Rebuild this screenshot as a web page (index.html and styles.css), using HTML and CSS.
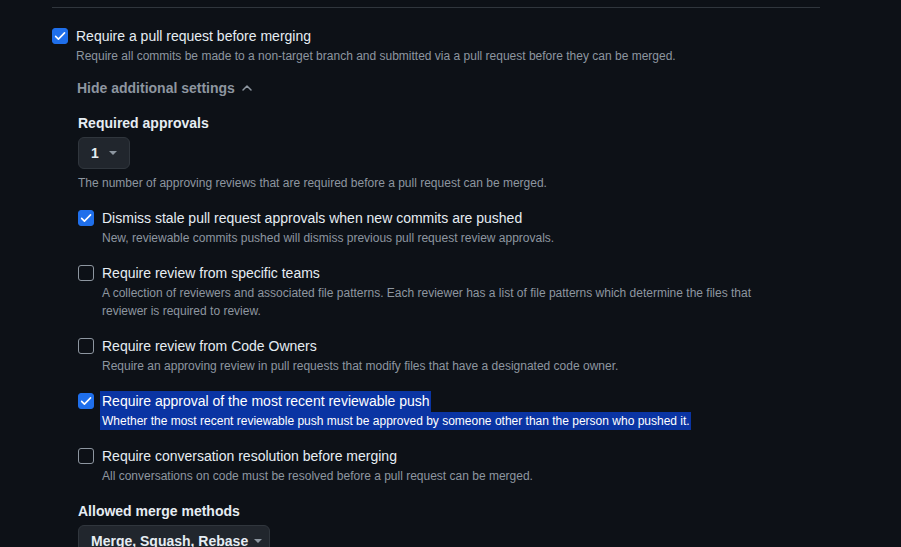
FILE: index.html
```html
<!DOCTYPE html>
<html lang="en">
<head>
<meta charset="UTF-8">
<meta name="viewport" content="width=device-width, initial-scale=1.0">
<title>Branch protection rule</title>
<link rel="stylesheet" href="styles.css">
</head>
<body>
<div class="section">
    <div class="rule">
        <span class="checkbox checked">
            <svg viewBox="0 0 16 16" width="14" height="14"><path d="M3 8.4l3.2 3.2 7-7.2" fill="none" stroke="#fff" stroke-width="1.8" stroke-linecap="round" stroke-linejoin="round"/></svg>
        </span>
        <div class="rule-body">
            <div class="rule-title">Require a pull request before merging</div>
            <div class="rule-note">Require all commits be made to a non-target branch and submitted via a pull request before they can be merged.</div>
        </div>
    </div>

    <div class="nested">
        <div class="toggle">Hide additional settings
            <svg viewBox="0 0 16 16" width="16" height="16"><path d="M4 10l4-4 4 4" fill="none" stroke="currentColor" stroke-width="1.5" stroke-linecap="round" stroke-linejoin="round"/></svg>
        </div>

        <div class="inner">
            <div class="label">Required approvals</div>
            <button class="select small">1 <span class="caret"></span></button>
            <div class="help">The number of approving reviews that are required before a pull request can be merged.</div>

            <div class="rule sub">
                <span class="checkbox checked">
                    <svg viewBox="0 0 16 16" width="14" height="14"><path d="M3 8.4l3.2 3.2 7-7.2" fill="none" stroke="#fff" stroke-width="1.8" stroke-linecap="round" stroke-linejoin="round"/></svg>
                </span>
                <div class="rule-body">
                    <div class="rule-title">Dismiss stale pull request approvals when new commits are pushed</div>
                    <div class="rule-note">New, reviewable commits pushed will dismiss previous pull request review approvals.</div>
                </div>
            </div>

            <div class="rule sub">
                <span class="checkbox"></span>
                <div class="rule-body">
                    <div class="rule-title">Require review from specific teams</div>
                    <div class="rule-note wrap">A collection of reviewers and associated file patterns. Each reviewer has a list of file patterns which determine the files that reviewer is required to review.</div>
                </div>
            </div>

            <div class="rule sub">
                <span class="checkbox"></span>
                <div class="rule-body">
                    <div class="rule-title">Require review from Code Owners</div>
                    <div class="rule-note">Require an approving review in pull requests that modify files that have a designated code owner.</div>
                </div>
            </div>

            <div class="rule sub">
                <span class="checkbox checked">
                    <svg viewBox="0 0 16 16" width="14" height="14"><path d="M3 8.4l3.2 3.2 7-7.2" fill="none" stroke="#fff" stroke-width="1.8" stroke-linecap="round" stroke-linejoin="round"/></svg>
                </span>
                <div class="rule-body">
                    <div class="rule-title"><span class="selected first">Require approval of the most recent reviewable push</span></div>
                    <div class="rule-note"><span class="selected">Whether the most recent reviewable push must be approved by someone other than the person who pushed it.</span></div>
                </div>
            </div>

            <div class="rule sub">
                <span class="checkbox"></span>
                <div class="rule-body">
                    <div class="rule-title">Require conversation resolution before merging</div>
                    <div class="rule-note">All conversations on code must be resolved before a pull request can be merged.</div>
                </div>
            </div>

            <div class="label gap">Allowed merge methods</div>
            <button class="select wide">Merge, Squash, Rebase <span class="caret"></span></button>
        </div>
    </div>
</div>
</body>
</html>
```

FILE: styles.css
```css
body {
font-family: "Liberation Sans", Arial, sans-serif;
background-color: #0d1117;
color: #e6edf3;
margin: 0;
padding: 7px 0 0 52px;
overflow: hidden;
}
.section {
width: 768px;
border-top: 1px solid #30363d;
padding-top: 18px;
}
.rule {
display: flex;
gap: 8px;
}
.checkbox {
flex: none;
width: 16px;
height: 16px;
margin-top: 2px;
box-sizing: border-box;
border: 1px solid #8d96a0;
border-radius: 3px;
display: flex;
align-items: center;
justify-content: center;
}
.checkbox.checked {
background-color: #1f6feb;
border-color: #1f6feb;
}
.rule-title {
font-size: 14px;
line-height: 20px;
}
.rule-note {
margin-top: 1px;
font-size: 12px;
line-height: 18px;
color: #8d96a0;
}
.rule-note.wrap {
max-width: 660px;
}
.selected {
display: inline-block;
background-color: #0a34a3;
color: #fff;
margin-left: -2px;
padding: 0 1px 0 2px;
}
.selected.first {
padding-bottom: 1px;
margin-bottom: -1px;
}
.nested {
padding-left: 25px;
}
.toggle {
margin-top: 13px;
font-size: 14px;
line-height: 20px;
font-weight: bold;
color: #8d96a0;
display: flex;
align-items: center;
gap: 4px;
}
.inner {
padding-left: 1px;
}
.label {
margin-top: 15px;
font-size: 14px;
line-height: 20px;
font-weight: bold;
}
.label.gap {
margin-top: 16px;
}
.select {
display: flex;
align-items: center;
gap: 10px;
margin-top: 4px;
height: 32px;
padding: 0 12px;
background-color: #21262d;
border: 1px solid #30363d;
border-radius: 6px;
color: #e6edf3;
font-family: inherit;
font-size: 14px;
font-weight: bold;
white-space: nowrap;
}
.select.wide {
width: 192px;
gap: 6px;
justify-content: space-between;
}
.caret {
flex: none;
width: 0;
height: 0;
border-left: 4px solid transparent;
border-right: 4px solid transparent;
border-top: 4px solid #8d96a0;
}
.help {
margin-top: 5px;
font-size: 12px;
line-height: 18px;
color: #8d96a0;
}
.rule.sub {
margin-top: 16px;
}
```
